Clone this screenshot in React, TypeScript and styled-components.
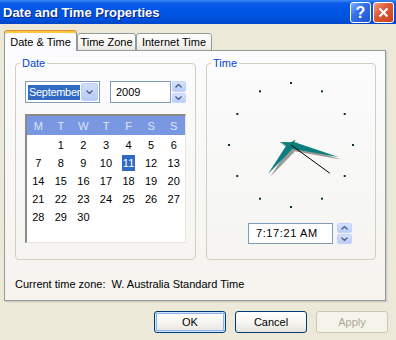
import React from 'react';
import styled, { createGlobalStyle } from 'styled-components';

const GlobalStyle = createGlobalStyle`
  html, body {
    margin: 0;
    padding: 0;
    background: #ece9d8;
  }
  body {
    font-family: 'Liberation Sans', Tahoma, Arial, sans-serif;
    font-size: 11px;
    color: #000;
  }
`;

const Window = styled.div`
  width: 396px;
  height: 340px;
  background: #ece9d8;
  display: flex;
  flex-direction: column;
  overflow: hidden;
`;

const TitleBar = styled.div`
  height: 24px;
  flex: none;
  display: flex;
  align-items: center;
  justify-content: space-between;
  padding: 0 2px 0 3px;
  background: linear-gradient(
    to bottom,
    #3b88f5 0%,
    #0a5ce8 14%,
    #0055e3 45%,
    #0050dc 80%,
    #0046c9 100%
  );
`;

const Title = styled.span`
  font-weight: bold;
  font-size: 13px;
  color: #fff;
  text-shadow: 1px 1px 0 #0a2080;
`;

const CaptionButtons = styled.div`
  display: flex;
  gap: 2px;
  padding-top: 1px;
`;

const CaptionButton = styled.div<{ $close?: boolean }>`
  width: 21px;
  height: 21px;
  box-sizing: border-box;
  border: 1px solid #fff;
  border-radius: 3px;
  display: flex;
  align-items: center;
  justify-content: center;
  color: #fff;
  font-weight: bold;
  font-size: 16px;
  background: ${(p) =>
    p.$close
      ? 'linear-gradient(135deg, #f3a088 0%, #e05a36 40%, #c9401b 100%)'
      : 'linear-gradient(135deg, #7fb0ff 0%, #3572ea 40%, #1d52d3 100%)'};
`;

const Body = styled.div`
  display: flex;
  flex-direction: column;
  padding: 7px 10px 0 4px;
`;

const TabStrip = styled.div`
  display: flex;
  align-items: flex-end;
  height: 20px;
  margin-bottom: -1px;
  position: relative;
  z-index: 1;
`;

const Tab = styled.div<{ $active?: boolean; $w: number }>`
  width: ${(p) => p.$w}px;
  height: ${(p) => (p.$active ? 21 : 18)}px;
  box-sizing: border-box;
  display: flex;
  align-items: center;
  justify-content: center;
  border: 1px solid #919b9c;
  border-top-color: ${(p) => (p.$active ? '#e68b2c' : '#919b9c')};
  border-bottom: ${(p) => (p.$active ? 'none' : '1px solid #919b9c')};
  border-radius: 3px 3px 0 0;
  background: ${(p) =>
    p.$active ? '#fcfcfe' : 'linear-gradient(#ffffff, #f4f3ee 70%, #e8e7e1)'};
  box-shadow: ${(p) => (p.$active ? 'inset 0 2px 0 #ffc73c' : 'none')};
  padding-top: ${(p) => (p.$active ? 1 : 0)}px;
`;

const Panel = styled.div`
  height: 251px;
  box-sizing: border-box;
  border: 1px solid #919b9c;
  background: linear-gradient(to bottom, #fcfcfe, #f4f3ee);
  box-shadow: 1px 1px 0 #d0cebf, 2px 2px 0 #e0ded3;
  padding: 6px 8px 0 10px;
  display: flex;
  flex-direction: column;
`;

const GroupRow = styled.div`
  display: flex;
  gap: 10px;
`;

const Group = styled.fieldset<{ $w: number }>`
  width: ${(p) => p.$w}px;
  box-sizing: border-box;
  margin: 0;
  padding: 0 9px 15px;
  border: 1px solid #d0d0bf;
  border-radius: 4px;
  min-width: 0;
  display: flex;
  flex-direction: column;
`;

const Legend = styled.legend`
  color: #0046d5;
  padding: 0 2px;
  margin-left: -5px;
  line-height: 13px;
`;

const DateRow = styled.div`
  display: flex;
  align-items: center;
  margin-top: 11px;
`;

const Combo = styled.div`
  width: 75px;
  height: 22px;
  box-sizing: border-box;
  border: 1px solid #7f9db9;
  background: #fff;
  display: flex;
  align-items: center;
  padding: 1px;
  margin-right: 10px;
`;

const ComboText = styled.span`
  flex: 1;
  margin: 0 1px 0 1px;
  padding-left: 1px;
  background: #316ac5;
  color: #fff;
  line-height: 15px;
  letter-spacing: -0.3px;
  overflow: hidden;
  white-space: nowrap;
`;

const DropButton = styled.div`
  width: 17px;
  height: 18px;
  flex: none;
  box-sizing: border-box;
  border: 1px solid #bccff8;
  border-radius: 2px;
  background: linear-gradient(#d2defc, #b7cbf6);
  display: flex;
  align-items: center;
  justify-content: center;
`;

const Edit = styled.div<{ $w: number; $h: number; $pad: number }>`
  width: ${(p) => p.$w}px;
  height: ${(p) => p.$h}px;
  box-sizing: border-box;
  border: 1px solid #7f9db9;
  background: #fff;
  padding-left: ${(p) => p.$pad}px;
  line-height: ${(p) => p.$h - 2}px;
  letter-spacing: ${(p) => (p.$pad > 5 ? 0.6 : 0)}px;
`;

const Spinner = styled.div<{ $h: number; $gap: number }>`
  width: 15px;
  height: ${(p) => p.$h}px;
  margin-left: ${(p) => p.$gap}px;
  display: flex;
  flex-direction: column;
  gap: 1px;
`;

const SpinHalf = styled.div`
  flex: 1;
  box-sizing: border-box;
  border: 1px solid #c3d3fb;
  border-radius: 2px;
  background: linear-gradient(#d6e2fd, #b9cdf7);
  display: flex;
  align-items: center;
  justify-content: center;
`;

const Calendar = styled.div`
  width: 161px;
  height: 129px;
  box-sizing: border-box;
  margin-top: 11px;
  background: #fff;
  border-top: 2px solid #8a8a8a;
  border-left: 2px solid #8a8a8a;
  border-right: 1px solid #e8e6da;
  border-bottom: 1px solid #e8e6da;
`;

const CalHeader = styled.div`
  height: 19px;
  background: #7a98e2;
  display: grid;
  grid-template-columns: repeat(7, 1fr);
  align-items: center;
  justify-items: center;
  color: #dde6fa;
`;

const CalGrid = styled.div`
  display: grid;
  grid-template-columns: repeat(7, 1fr);
  grid-auto-rows: 18px;
  align-items: center;
  justify-items: center;
  padding-top: 1px;
`;

const Day = styled.span<{ $sel?: boolean }>`
  padding: 0 1px;
  line-height: 16px;
  background: ${(p) => (p.$sel ? '#316ac5' : 'transparent')};
  color: ${(p) => (p.$sel ? '#fff' : '#000')};
`;

const ClockSvg = styled.svg`
  display: block;
  margin: 8px auto 0;
`;

const TimeRow = styled.div`
  display: flex;
  align-items: center;
  margin-top: 11px;
  padding-left: 32px;
`;

const ZoneText = styled.div`
  margin-top: 18px;
  line-height: 13px;
  white-space: pre;
`;

const ButtonRow = styled.div`
  display: flex;
  justify-content: flex-end;
  gap: 9px;
  padding: 10px 8px 0 0;
`;

const Button = styled.div<{ $default?: boolean; $disabled?: boolean }>`
  width: 72px;
  height: 22px;
  box-sizing: border-box;
  border: 1px solid ${(p) => (p.$disabled ? '#c9c7ba' : '#003c74')};
  border-radius: 3px;
  display: flex;
  align-items: center;
  justify-content: center;
  color: ${(p) => (p.$disabled ? '#aca899' : '#000')};
  background: ${(p) =>
    p.$disabled ? '#f5f4ea' : 'linear-gradient(#ffffff, #f5f4f0 55%, #e4e3dc)'};
  box-shadow: ${(p) =>
    p.$default ? 'inset 0 0 0 1px #cee7ff, inset 0 0 0 2px #8fb2ec' : 'none'};
`;

const Chevron = ({ up }: { up?: boolean }) => (
  <svg width="7" height="4" viewBox="0 0 7 4">
    <path
      d={up ? 'M0.5 3.5 L3.5 0.5 L6.5 3.5' : 'M0.5 0.5 L3.5 3.5 L6.5 0.5'}
      fill="none"
      stroke="#4d6185"
      strokeWidth="1.4"
    />
  </svg>
);

const SpinBox = ({ h, gap }: { h: number; gap: number }) => (
  <Spinner $h={h} $gap={gap}>
    <SpinHalf>
      <Chevron up />
    </SpinHalf>
    <SpinHalf>
      <Chevron />
    </SpinHalf>
  </Spinner>
);

const rad = (deg: number) => (deg * Math.PI) / 180;

const handPoints = (deg: number, len: number, tail: number, w: number, b: number) => {
  const dx = Math.sin(rad(deg));
  const dy = -Math.cos(rad(deg));
  const px = -dy;
  const py = dx;
  const pts = [
    [dx * len, dy * len],
    [dx * b + px * w, dy * b + py * w],
    [-dx * tail, -dy * tail],
    [dx * b - px * w, dy * b - py * w],
  ];
  return pts.map(([x, y]) => `${x.toFixed(1)},${y.toFixed(1)}`).join(' ');
};

const Clock = () => {
  const hourDeg = (7 + 17 / 60) * 30;
  const minDeg = (17 + 21 / 60) * 6;
  const secDeg = 21 * 6;
  const hour = handPoints(hourDeg, 37, 7, 3.5, 3);
  const minute = handPoints(minDeg, 49, 12, 3.5, 3);
  return (
    <ClockSvg width="150" height="134" viewBox="-75 -67 150 134">
      {Array.from({ length: 12 }, (_, i) => (
        <rect
          key={i}
          x={62 * Math.sin(rad(i * 30)) - 1}
          y={-62 * Math.cos(rad(i * 30)) - 1}
          width="2"
          height="2"
          fill="#0c3434"
        />
      ))}
      <g transform="translate(2.5 2.5)" fill="#9a9a9a">
        <polygon points={hour} />
        <polygon points={minute} />
      </g>
      <polygon points={hour} fill="#0b7f7f" />
      <polygon points={minute} fill="#0b7f7f" />
      <line
        x1="0"
        y1="0"
        x2={48 * Math.sin(rad(secDeg))}
        y2={-48 * Math.cos(rad(secDeg))}
        stroke="#000"
        strokeWidth="1"
      />
    </ClockSvg>
  );
};

const days: (number | null)[] = [null, ...Array.from({ length: 30 }, (_, i) => i + 1)];

const App: React.FC = () => {
  return (
    <>
      <GlobalStyle />
      <Window>
        <TitleBar>
          <Title>Date and Time Properties</Title>
          <CaptionButtons>
            <CaptionButton>?</CaptionButton>
            <CaptionButton $close>
              <svg width="11" height="11" viewBox="0 0 11 11">
                <path d="M1.5 1.5 L9.5 9.5 M9.5 1.5 L1.5 9.5" stroke="#fff" strokeWidth="2.2" />
              </svg>
            </CaptionButton>
          </CaptionButtons>
        </TitleBar>

        <Body>
          <TabStrip>
            <Tab $active $w={73}>Date &amp; Time</Tab>
            <Tab $w={59}>Time Zone</Tab>
            <Tab $w={76}>Internet Time</Tab>
          </TabStrip>
          <Panel>
            <GroupRow>
              <Group $w={181}>
                <Legend>Date</Legend>
                <DateRow>
                  <Combo>
                    <ComboText>September</ComboText>
                    <DropButton>
                      <Chevron />
                    </DropButton>
                  </Combo>
                  <Edit $w={63} $h={22} $pad={5}>
                    2009
                  </Edit>
                  <SpinBox h={22} gap={1} />
                </DateRow>
                <Calendar>
                  <CalHeader>
                    {['M', 'T', 'W', 'T', 'F', 'S', 'S'].map((d, i) => (
                      <span key={i}>{d}</span>
                    ))}
                  </CalHeader>
                  <CalGrid>
                    {days.map((d, i) => (
                      <Day key={i} $sel={d === 11}>
                        {d ?? ''}
                      </Day>
                    ))}
                  </CalGrid>
                </Calendar>
              </Group>

              <Group $w={170}>
                <Legend>Time</Legend>
                <Clock />
                <TimeRow>
                  <Edit $w={85} $h={21} $pad={7}>
                    7:17:21 AM
                  </Edit>
                  <SpinBox h={21} gap={4} />
                </TimeRow>
              </Group>
            </GroupRow>
            <ZoneText>Current time zone:  W. Australia Standard Time</ZoneText>
          </Panel>
        </Body>

        <ButtonRow>
          <Button $default>OK</Button>
          <Button>Cancel</Button>
          <Button $disabled>Apply</Button>
        </ButtonRow>
      </Window>
    </>
  );
};

export default App;
